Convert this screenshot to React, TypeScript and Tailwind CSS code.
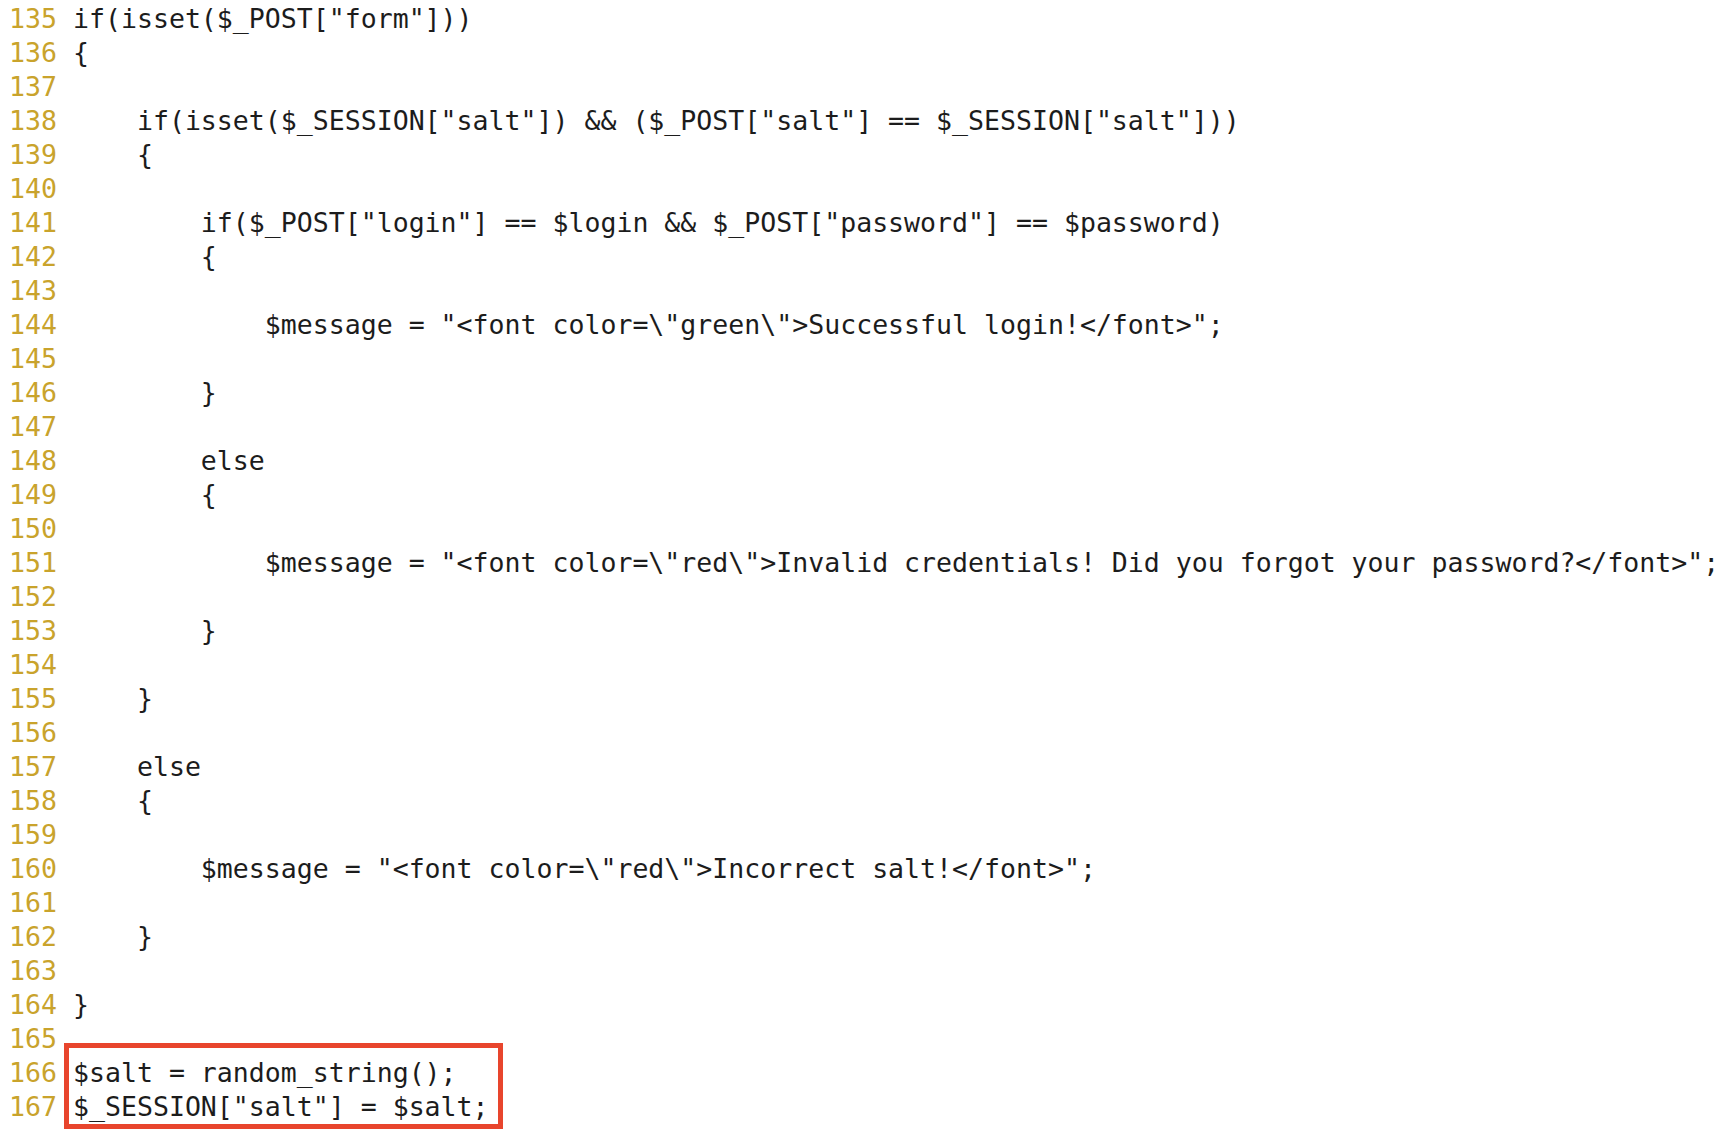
import React from "react";

const lines: [number, string][] = [
  [135, 'if(isset($_POST["form"]))'],
  [136, "{"],
  [137, ""],
  [138, '    if(isset($_SESSION["salt"]) && ($_POST["salt"] == $_SESSION["salt"]))'],
  [139, "    {"],
  [140, ""],
  [141, '        if($_POST["login"] == $login && $_POST["password"] == $password)'],
  [142, "        {"],
  [143, ""],
  [144, '            $message = "<font color=\\"green\\">Successful login!</font>";'],
  [145, ""],
  [146, "        }"],
  [147, ""],
  [148, "        else"],
  [149, "        {"],
  [150, ""],
  [151, '            $message = "<font color=\\"red\\">Invalid credentials! Did you forgot your password?</font>";'],
  [152, ""],
  [153, "        }"],
  [154, ""],
  [155, "    }"],
  [156, ""],
  [157, "    else"],
  [158, "    {"],
  [159, ""],
  [160, '        $message = "<font color=\\"red\\">Incorrect salt!</font>";'],
  [161, ""],
  [162, "    }"],
  [163, ""],
  [164, "}"],
  [165, ""],
];

const boxed: [number, string][] = [
  [166, "$salt = random_string();"],
  [167, '$_SESSION["salt"] = $salt;'],
];

function Line({ n, code }: { n: number; code: string }) {
  return (
    <div className="flex h-[34px] items-center whitespace-pre">
      <span className="w-[64px] shrink-0 text-[#c9a32c]">{n}</span>
      <span className="text-[#1c1c1c]">{code}</span>
    </div>
  );
}

export default function App() {
  return (
    <div className="h-[1130px] w-[1728px] overflow-hidden bg-white pl-[9px] pt-[2px] font-['DejaVu_Sans_Mono',monospace] text-[26.56px] leading-[34px]">
      {lines.map(([n, c]) => (
        <Line key={n} n={n} code={c} />
      ))}
      <div className="relative">
        {boxed.map(([n, c]) => (
          <Line key={n} n={n} code={c} />
        ))}
        <div className="pointer-events-none absolute left-[55px] top-[-13px] h-[86px] w-[439px] border-[5px] border-[#e8452d]" />
      </div>
    </div>
  );
}
